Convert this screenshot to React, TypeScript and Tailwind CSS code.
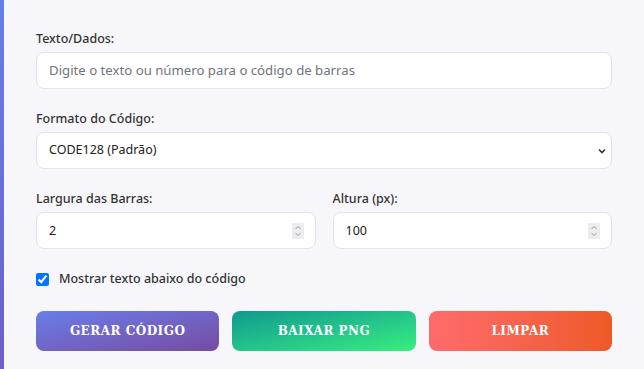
import { useState } from "react";

const labelCls =
  "block text-[12.5px] leading-5 font-medium text-[#333]";
const fieldCls =
  "w-full rounded-lg border border-[#e1e4ec] bg-white px-3 text-[12.5px] text-[#222] outline-none";

function Spinner() {
  return (
    <svg
      className="pointer-events-none absolute right-[12px] top-1/2 -translate-y-1/2"
      width="12"
      height="16"
      viewBox="0 0 12 16"
    >
      <rect width="12" height="16" fill="#ececee" />
      <path d="M3.5 6 L6 3.5 L8.5 6" fill="none" stroke="#9a9aa0" strokeWidth="1" />
      <path d="M3.5 10 L6 12.5 L8.5 10" fill="none" stroke="#9a9aa0" strokeWidth="1" />
    </svg>
  );
}

export default function App() {
  const [text, setText] = useState("");
  const [format, setFormat] = useState("CODE128");
  const [width, setWidth] = useState("2");
  const [height, setHeight] = useState("100");
  const [showText, setShowText] = useState(true);

  return (
    <div
      className="flex h-[369px] w-[644px] bg-[#f7f7fb]"
      style={{ fontFamily: "'Noto Sans', 'Liberation Sans', sans-serif" }}
    >
      <div className="w-1 shrink-0 bg-gradient-to-b from-[#667eea] to-[#6f5fc8]" />
      <div className="flex flex-1 flex-col pl-8 pr-8 pt-[29px]">
        <div>
          <label className={labelCls}>Texto/Dados:</label>
          <input
            type="text"
            value={text}
            onChange={e => setText(e.target.value)}
            placeholder="Digite o texto ou número para o código de barras"
            className={`${fieldCls} mt-[3px] h-[37px] placeholder:text-[13.2px] placeholder:text-[#70747c]`}
          />
        </div>

        <div className="mt-5">
          <label className={labelCls}>Formato do Código:</label>
          <div className="relative mt-[3px]">
            <select
              value={format}
              onChange={e => setFormat(e.target.value)}
              className={`${fieldCls} h-[37px] appearance-none pr-6`}
            >
              <option value="CODE128">CODE128 (Padrão)</option>
              <option value="EAN13">EAN-13</option>
              <option value="UPC">UPC</option>
              <option value="CODE39">CODE39</option>
            </select>
            <svg
              className="pointer-events-none absolute right-[6px] top-1/2 -translate-y-1/2"
              width="8"
              height="6"
              viewBox="0 0 8 6"
            >
              <path d="M1 1.5 L4 4.5 L7 1.5" fill="none" stroke="#333" strokeWidth="1.6" />
            </svg>
          </div>
        </div>

        <div className="mt-5 grid grid-cols-2 gap-[17px]">
          <div>
            <label className={labelCls}>Largura das Barras:</label>
            <div className="relative mt-[3px]">
              <input
                type="number"
                value={width}
                onChange={e => setWidth(e.target.value)}
                className={`${fieldCls} h-[37px] [appearance:textfield] [&::-webkit-inner-spin-button]:appearance-none`}
              />
              <Spinner />
            </div>
          </div>
          <div>
            <label className={labelCls}>Altura (px):</label>
            <div className="relative mt-[3px]">
              <input
                type="number"
                value={height}
                onChange={e => setHeight(e.target.value)}
                className={`${fieldCls} h-[37px] [appearance:textfield] [&::-webkit-inner-spin-button]:appearance-none`}
              />
              <Spinner />
            </div>
          </div>
        </div>

        <label className="mt-5 flex h-5 items-center gap-[10px] text-[12.5px] font-medium text-[#333]">
          <input
            type="checkbox"
            checked={showText}
            onChange={e => setShowText(e.target.checked)}
            className="h-[13px] w-[13px] accent-[#0075ff]"
          />
          Mostrar texto abaixo do código
        </label>

        <div
          className="mt-[22px] grid grid-cols-3 gap-[13px] text-[12px] font-bold tracking-[0.5px] text-white"
          style={{ fontFamily: "'DejaVu Serif', serif" }}
        >
          <button className="h-10 rounded-lg bg-gradient-to-br from-[#667eea] to-[#764ba2]">
            GERAR CÓDIGO
          </button>
          <button className="h-10 rounded-lg bg-gradient-to-br from-[#11998e] to-[#38ef7d]">
            BAIXAR PNG
          </button>
          <button className="h-10 rounded-lg bg-gradient-to-r from-[#ff6b6b] to-[#ee5a24]">
            LIMPAR
          </button>
        </div>
      </div>
    </div>
  );
}
